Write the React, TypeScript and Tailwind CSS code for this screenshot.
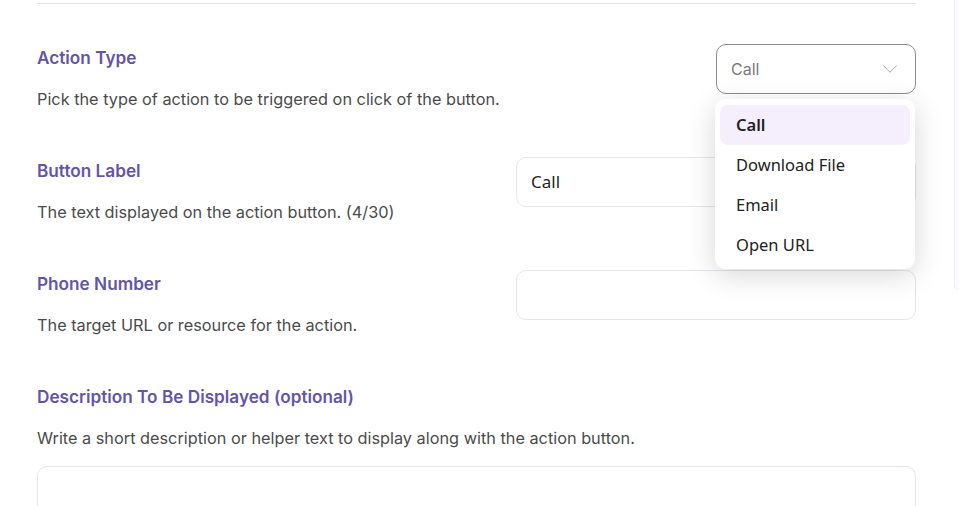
import { ChevronDown } from 'lucide-react'

const inter = { fontFamily: 'Inter, "Liberation Sans", sans-serif' }

// Segoe-like system text used by the native controls
const sysFont = '[font-family:"Noto_Sans","Open_Sans",sans-serif]'

function FieldText({ label, hint }: { label: string; hint: string }) {
  return (
    <div>
      <div className="h-7 text-[17.2px] leading-7 font-semibold text-[#6454a9]">{label}</div>
      <p className="mt-[15px] text-[16.3px] leading-6 text-[#4b4b4b]">{hint}</p>
    </div>
  )
}

function TextBox({ value }: { value?: string }) {
  return (
    <div
      className={`flex h-[50px] w-[400px] items-center rounded-[10px] border border-[#e6e5ee] bg-white px-[14px] text-[17px] text-[#1f1f1f] ${sysFont}`}
    >
      {value}
    </div>
  )
}

const options = ['Call', 'Download File', 'Email', 'Open URL']

export default function App() {
  return (
    <div className="flex h-[506px] w-full overflow-hidden bg-white" style={inter}>
      <div className="w-[954px] shrink-0 pl-[37px] pr-[38px]">
        <div className="mt-[3px] border-t border-[#e4e4e7]" />

        <div className="mt-[40px] space-y-[46px]">
          {/* action type */}
          <div className="flex items-start justify-between">
            <FieldText
              label="Action Type"
              hint="Pick the type of action to be triggered on click of the button."
            />
            <div className="relative">
              <div className="flex h-[50px] w-[200px] items-center justify-between rounded-[10px] border border-[#8c8c8c] bg-white pr-[12px] pl-[14px]">
                <span className="text-base text-[#7a7a7a]">Call</span>
                <ChevronDown size={26} strokeWidth={0.9} className="text-[#a3a3a3]" />
              </div>
              <ul
                className={`absolute top-[55px] -left-px z-10 w-[200px] rounded-[10px] bg-white px-[5px] pt-[6px] pb-[4px] shadow-[0_6px_28px_rgba(0,0,0,0.16)] ${sysFont}`}
              >
                {options.map((o, i) => (
                  <li
                    key={o}
                    className={
                      i === 0
                        ? 'flex h-10 items-center rounded-lg bg-[#f5effd] px-[16px] text-[16.5px] font-semibold text-[#222]'
                        : 'flex h-10 items-center px-[16px] text-[16.5px] text-[#222]'
                    }
                  >
                    {o}
                  </li>
                ))}
              </ul>
            </div>
          </div>

          <div className="flex items-start justify-between">
            <FieldText label="Button Label" hint="The text displayed on the action button. (4/30)" />
            <TextBox value="Call" />
          </div>

          <div className="flex items-start justify-between">
            <FieldText label="Phone Number" hint="The target URL or resource for the action." />
            <TextBox />
          </div>

          <div>
            <FieldText
              label="Description To Be Displayed (optional)"
              hint="Write a short description or helper text to display along with the action button."
            />
            <div className="mt-4 h-[90px] w-full rounded-[10px] border border-[#e6e5ee] bg-white" />
          </div>
        </div>
      </div>

      <div className="h-[290px] flex-1 rounded-bl-2xl border-b border-l border-[#efedf7] bg-[#fbfaff]" />
    </div>
  )
}
